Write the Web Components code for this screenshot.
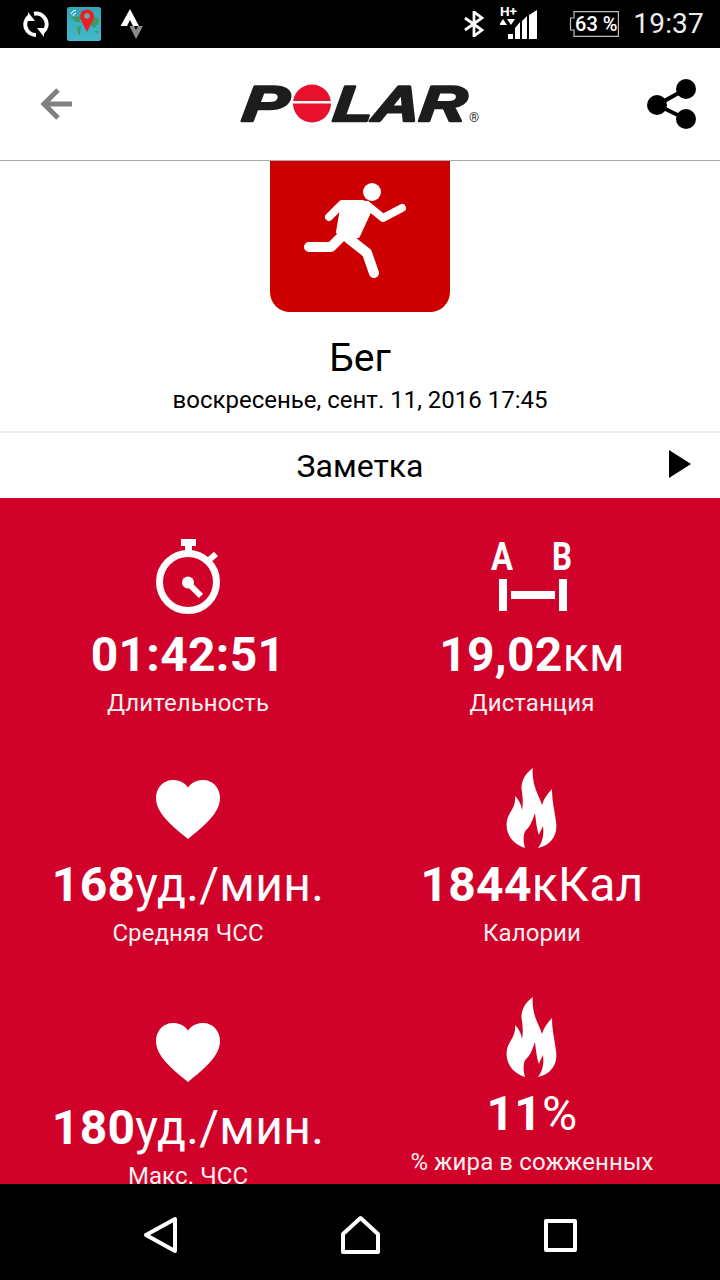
<!DOCTYPE html>
<html>
<head>
<meta charset="utf-8">
<title>Polar</title>
<style>
  html, body { margin: 0; padding: 0; background: black; }
  body { width: 720px; height: 1280px; overflow: hidden; font-family: Roboto, "Noto Sans", sans-serif; }
  #app { display: flex; flex-direction: column; height: 1280px; }
</style>
</head>
<body>
<div id="app">
  <status-bar></status-bar>
  <app-header></app-header>
  <activity-head title="Бег" date="воскресенье, сент. 11, 2016 17:45"></activity-head>
  <note-row>Заметка</note-row>
  <stat-panel>
    <div slot="left">
      <stat-card icon="watch" value="01:42:51" label="Длительность"></stat-card>
      <stat-card icon="heart" value="168" unit="уд./мин." label="Средняя ЧСС"></stat-card>
      <stat-card icon="heart" value="180" unit="уд./мин." label="Макс. ЧСС" style="margin-top:13px"></stat-card>
    </div>
    <div slot="right">
      <stat-card icon="dist" value="19,02" unit="км" label="Дистанция"></stat-card>
      <stat-card icon="flame" value="1844" unit="кКал" label="Калории"></stat-card>
      <stat-card icon="flame" value="11" unit="%" label="% жира в сожженных" style="margin-top:-1px"></stat-card>
    </div>
  </stat-panel>
  <nav-bar></nav-bar>
</div>

<script>
const flamePath = 'M53 8C44 14 40 24 42 32C43 40 43 45 42 50C41 44 39 40 35 36C36 46 31 50 28 57C24 68 28 82 45 88C43 80 43 74 46 70C49 68 52 62 55 53C56 62 57 70 59 75C60 71 62 69 63 66C64 74 63 82 58 88C72 85 78 74 76 62C75 52 72 42 72 29C68 33 64 38 62 45C60 38 56 32 54 24C53 18 52 12 53 8Z';

// icons of the stat cards, top is the offset inside the 91px icon box
const statIcons = {
  watch: { top: 1, svg: `<svg width="68" height="76" viewBox="154 539 68 76" fill="none" stroke="#fff">
    <circle cx="188" cy="582" r="28.5" stroke-width="7"/>
    <path d="M181 542.5H196" stroke-width="7"/><path d="M188.500 546V553" stroke-width="7"/>
    <path d="M209 560L216 554" stroke-width="6"/>
    <circle cx="188" cy="582.500" r="6" fill="#fff" stroke="none"/>
    <path d="M189 584L201 596" stroke-width="6"/></svg>` },
  dist: { top: -8, svg: `<svg width="104" height="82" viewBox="480 530 104 82" fill="#fff">
    <text x="491" y="570" font-family="Roboto" font-weight="700" font-size="38" textLength="22" lengthAdjust="spacingAndGlyphs">A</text>
    <text x="552" y="570" font-family="Roboto" font-weight="700" font-size="38" textLength="20" lengthAdjust="spacingAndGlyphs">B</text>
    <rect x="499" y="579" width="8" height="32"/><rect x="511" y="591" width="44" height="8"/><rect x="559" y="579" width="8" height="32"/></svg>` },
  heart: { top: 12, svg: `<svg width="64" height="59" viewBox="0 0 64 59" fill="#fff"><path d="M32 7.500C28 2 23 0 17 0C7 0 0 8 0 18C0 33 16 46 32 59C48 46 64 33 64 18C64 8 57 0 47 0C41 0 36 2 32 7.500Z"/></svg>` },
  flame: { top: -8, svg: `<svg width="100" height="90" viewBox="2 0 100 90" fill="#fff"><path d="${flamePath}"/></svg>` }
};

class StatusBar extends HTMLElement {
  constructor() {
    super();
    this.attachShadow({ mode: 'open' }).innerHTML = `
    <style>
      :host { display: flex; flex: none; height: 48px; background: #000; align-items: center; color: #fff; padding: 0 16px 0 23px; }
      svg { display: block; flex: none; }
      .left { display: flex; align-items: center; }
      .right { display: flex; align-items: center; margin-left: auto; }
      .map { margin-left: 18px; }
      .strava { margin-left: 19px; }
      .net { margin-left: 16px; }
      .battery { margin-left: 29px; width: 52px; height: 26px; box-sizing: border-box; position: relative; }
      .battery svg { position: absolute; left: 0; top: 0; }
      .battery span { position: absolute; left: 7px; right: 1px; top: 0; line-height: 26px; text-align: center; font-size: 20px; font-weight: 500; white-space: nowrap; }
      .time { margin-left: 14px; font-size: 28px; color: #eee; line-height: 48px; letter-spacing: .2px; }
    </style>
    <div class="left">
      <svg width="26" height="27" viewBox="0 0 26 27" fill="none" stroke="#fff" stroke-width="4">
        <path d="M6 5.500A10.500 10.500 0 0 0 13 24"/><path d="M11 2.800A10.500 10.500 0 0 1 20 21"/>
        <path d="M5 1V10H12Z" fill="#fff" stroke="none"/><path d="M21 26V17H14Z" fill="#fff" stroke="none"/>
      </svg>
      <svg class="map" width="34" height="34" viewBox="0 0 34 34">
        <defs><linearGradient id="sea" x1="0" y1="0" x2="0" y2="1"><stop offset="0" stop-color="#2fa8b8"/><stop offset="1" stop-color="#45b8cc"/></linearGradient></defs>
        <rect width="34" height="34" rx="2" fill="url(#sea)"/>
        <path d="M4 10L14 9L13 15L9 15L7 13ZM10 20L14 19L13 28L11 27ZM20 11L31 10L32 16L27 21L22 16ZM27 24L31 24L30 27Z" fill="#3f9a62"/>
        <path d="M4 7A6 6 0 0 1 9 3M6 9A4 4 0 0 1 9 6" stroke="#fff" stroke-width="1" fill="none"/>
        <path d="M20 25L14 13A7 7 0 1 1 26 13Z" fill="#ee1c25"/><circle cx="20" cy="9" r="2.800" fill="#5cb0b4"/>
      </svg>
      <svg class="strava" width="24" height="32" viewBox="120 8 24 32">
        <path d="M130 9L120.500 26H127L130 20L133 26H139Z" fill="#fff"/>
        <path d="M129.500 26L136 39L143 26H138L136 30L134 26Z" fill="#8a8a8a"/>
      </svg>
    </div>
    <div class="right">
      <svg width="20" height="26" viewBox="0 0 20 26" fill="none" stroke="#fff" stroke-width="2.800"><path d="M1 7L18 19L10 25V1L18 7L1 19"/></svg>
      <svg class="net" width="38" height="40" viewBox="499 4 38 40" fill="#fff">
        <text x="499" y="16" font-family="Roboto" font-weight="700" font-size="13" textLength="17" lengthAdjust="spacingAndGlyphs">H+</text>
        <path d="M502 19L506 25H498ZM510 25L514 19H506Z"/>
        <path d="M507 34V39H512V34ZM514 28V39H519V22ZM521 21V39H526V16ZM528 15V39H536V10Z"/>
      </svg>
      <div class="battery">
        <svg width="52" height="26" viewBox="0 0 52 26" fill="none" stroke="#bbb" stroke-width="1.200"><path d="M7 .6H51.400V25.400H7V19H3.500V7H7Z"/></svg>
        <span>63 %</span>
      </div>
      <span class="time">19:37</span>
    </div>`;
  }
}

class PolarLogo extends HTMLElement {
  constructor() {
    super();
    this.attachShadow({ mode: 'open' }).innerHTML = `
    <style>:host { display: block; } svg { display: block; }</style>
    <svg width="240" height="60" viewBox="240 74 240 60">
      <g transform="translate(10.800 0) skewX(-6)" font-family="'Liberation Sans'" font-weight="700" font-style="italic" font-size="50" fill="#1d1d1b" stroke="#1d1d1b" stroke-width="2.600" stroke-linejoin="round">
        <text x="243" y="121" textLength="46" lengthAdjust="spacingAndGlyphs">P</text>
        <text x="334" y="121" textLength="133" lengthAdjust="spacingAndGlyphs">LAR</text>
      </g>
      <circle cx="312" cy="103.500" r="19" fill="#e8112d"/>
      <rect x="292" y="101" width="40" height="2.500" fill="#fff"/>
      <text x="469" y="122" font-family="Roboto" font-size="13" fill="#333">®</text>
    </svg>`;
  }
}

class AppHeader extends HTMLElement {
  constructor() {
    super();
    this.attachShadow({ mode: 'open' }).innerHTML = `
    <style>
      :host { display: flex; flex: none; height: 113px; box-sizing: border-box; background: #fff; border-bottom: 1px solid #aaa; align-items: center; justify-content: space-between; padding: 0 24px 0 39px; }
      svg { display: block; }
    </style>
    <svg width="34" height="32" viewBox="39 88 34 32" fill="none" stroke="#808080" stroke-width="5"><path d="M72 104H44"/><path d="M58 90L44 104L58 118"/></svg>
    <polar-logo></polar-logo>
    <svg width="49" height="50" viewBox="647 79 49 50" fill="#000" stroke="#000">
      <path d="M686 89L657 105L686 119" fill="none" stroke-width="4"/>
      <circle cx="657" cy="105" r="10" stroke="none"/><circle cx="686" cy="89" r="10" stroke="none"/><circle cx="686" cy="119" r="10" stroke="none"/>
    </svg>`;
  }
}

class ActivityHead extends HTMLElement {
  constructor() {
    super();
    this.attachShadow({ mode: 'open' }).innerHTML = `
    <style>
      :host { display: flex; flex: none; flex-direction: column; align-items: center; height: 272px; box-sizing: border-box; background: #fff; border-bottom: 2px solid #ececec; color: #000; }
      .tile { width: 180px; height: 151px; background: #cc0000; border-radius: 0 0 20px 20px; }
      svg { display: block; }
      .title { font-size: 39px; line-height: 42px; margin-top: 25px; }
      .date { font-size: 24px; line-height: 28px; margin-top: 7px; }
    </style>
    <div class="tile">
      <svg width="180" height="151" viewBox="270 161 180 151" fill="none" stroke="#fff" stroke-linecap="round" stroke-linejoin="round">
        <circle cx="372" cy="192" r="9" fill="#fff" stroke="none"/>
        <path d="M329 217L342 204H362" stroke-width="8"/>
        <path d="M367 205L383 218L402 208" stroke-width="8"/>
        <path d="M343 203L367 203L370 210L358 236L344 238L338 232Z" fill="#fff" stroke-width="4"/>
        <path d="M309 247H331L343 235" stroke-width="10"/>
        <path d="M348 238L367 253L374 273" stroke-width="10"/>
      </svg>
    </div>
    <div class="title"></div>
    <div class="date"></div>`;
  }
  connectedCallback() {
    this.shadowRoot.querySelector('.title').textContent = this.getAttribute('title');
    this.shadowRoot.querySelector('.date').textContent = this.getAttribute('date');
  }
}

class NoteRow extends HTMLElement {
  constructor() {
    super();
    this.attachShadow({ mode: 'open' }).innerHTML = `
    <style>
      :host { display: flex; flex: none; position: relative; height: 65px; background: #fff; align-items: center; justify-content: center; font-size: 32px; color: #000; }
      svg { position: absolute; right: 29px; top: 17px; }
    </style>
    <slot></slot>
    <svg width="22" height="28" viewBox="0 0 22 28"><path d="M0 0L22 14L0 28Z" fill="#000"/></svg>`;
  }
}

class StatPanel extends HTMLElement {
  constructor() {
    super();
    this.attachShadow({ mode: 'open' }).innerHTML = `
    <style>
      :host { display: grid; flex: 1; min-height: 0; overflow: hidden; grid-template-columns: 344px 344px; padding: 40px 16px 0; background: #d0022a; color: #fff; }
    </style>
    <slot name="left"></slot>
    <slot name="right"></slot>`;
  }
}

class StatCard extends HTMLElement {
  constructor() {
    super();
    this.attachShadow({ mode: 'open' }).innerHTML = `
    <style>
      :host { display: flex; flex-direction: column; align-items: center; height: 230px; white-space: nowrap; }
      .icon { height: 91px; width: 100%; display: flex; justify-content: center; align-items: flex-start; }
      svg { display: block; }
      .value { font-size: 48px; line-height: 52px; font-weight: 700; letter-spacing: .3px; }
      .unit { font-weight: 400; }
      .label { font-size: 24px; line-height: 26px; margin-top: 9px; color: #fbeef0; letter-spacing: .1px; }
    </style>
    <div class="icon"></div>
    <div class="value"><span class="num"></span><span class="unit"></span></div>
    <div class="label"></div>`;
  }
  connectedCallback() {
    const root = this.shadowRoot;
    const icon = statIcons[this.getAttribute('icon')];
    const box = root.querySelector('.icon');
    box.innerHTML = icon.svg;
    box.firstElementChild.style.marginTop = icon.top + 'px';
    root.querySelector('.num').textContent = this.getAttribute('value');
    root.querySelector('.unit').textContent = this.getAttribute('unit') || '';
    root.querySelector('.label').textContent = this.getAttribute('label');
  }
}

class NavBar extends HTMLElement {
  constructor() {
    super();
    this.attachShadow({ mode: 'open' }).innerHTML = `
    <style>
      :host { display: grid; flex: none; height: 96px; grid-template-columns: repeat(3, 200px); padding: 0 60px; background: #000; align-items: center; justify-items: center; }
      svg { display: block; margin-top: 6px; }
    </style>
    <svg width="36" height="38" viewBox="142 1216 36 38" fill="none" stroke="#fff" stroke-width="4" stroke-linejoin="round"><path d="M146 1235L175 1219V1251Z"/></svg>
    <svg width="40" height="40" viewBox="340 1214 40 40" fill="none" stroke="#fff" stroke-width="4" stroke-linejoin="round"><path d="M360.500 1217L378 1233V1251H343V1233Z"/></svg>
    <svg width="36" height="36" viewBox="542 1217 36 36" fill="none" stroke="#fff" stroke-width="4" stroke-linejoin="round"><rect x="546" y="1221" width="29" height="29"/></svg>`;
  }
}

customElements.define('status-bar', StatusBar);
customElements.define('polar-logo', PolarLogo);
customElements.define('app-header', AppHeader);
customElements.define('activity-head', ActivityHead);
customElements.define('note-row', NoteRow);
customElements.define('stat-panel', StatPanel);
customElements.define('stat-card', StatCard);
customElements.define('nav-bar', NavBar);
</script>
</body>
</html>
